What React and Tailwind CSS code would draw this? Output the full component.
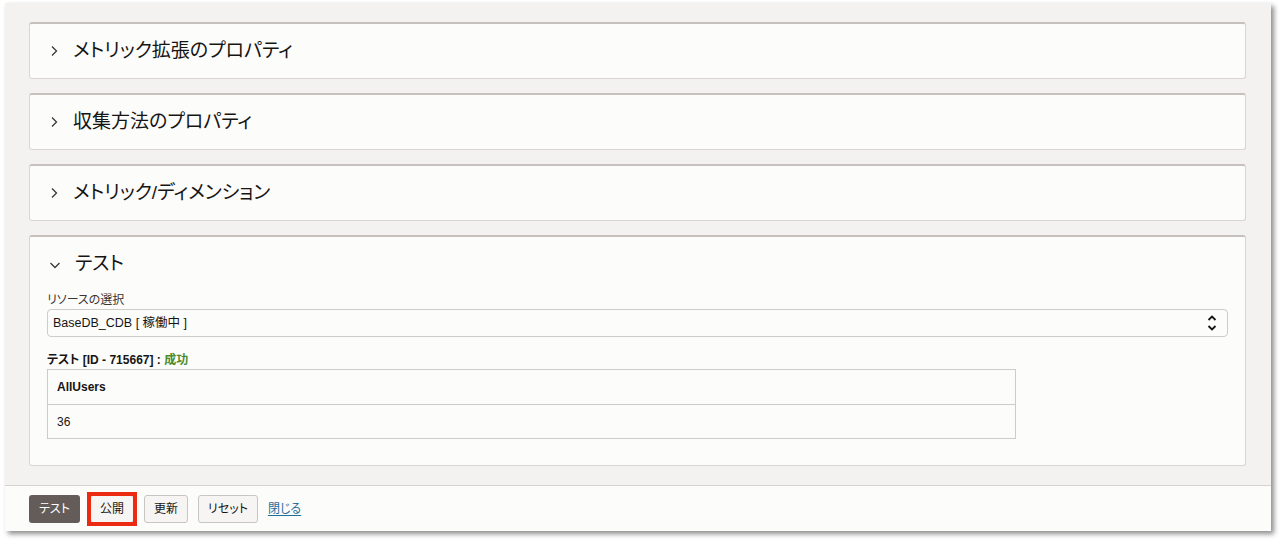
import React from 'react';

const JP = { fontFamily: '"Liberation Sans", "Noto Sans CJK JP", sans-serif', fontFeatureSettings: '"palt"' };

function ChevronRight() {
  return (
    <svg width="10" height="12" viewBox="0 0 10 12" className="shrink-0">
      <path d="M3 1.5 L7.5 6 L3 10.5" fill="none" stroke="#3a3633" strokeWidth="1.3" />
    </svg>
  );
}

function ChevronDown() {
  return (
    <svg width="12" height="10" viewBox="0 0 12 10" className="shrink-0">
      <path d="M1.5 3 L6 7.5 L10.5 3" fill="none" stroke="#3a3633" strokeWidth="1.3" />
    </svg>
  );
}

function UpDown() {
  return (
    <svg width="12" height="18" viewBox="0 0 12 18" className="shrink-0">
      <path d="M2.5 6 L6 2.5 L9.5 6" fill="none" stroke="#161513" strokeWidth="1.8" />
      <path d="M2.5 12 L6 15.5 L9.5 12" fill="none" stroke="#161513" strokeWidth="1.8" />
    </svg>
  );
}

// Collapsed accordion section
function Section({ title }) {
  return (
    <div className="bg-[#fcfcfb] border border-[#d9d5d1] border-t-2 border-t-[#c6c1bc] rounded-[3px] h-[57px] flex items-center pl-[19px] gap-[14px]">
      <ChevronRight />
      <span className="text-[19px] text-[#161513]">{title}</span>
    </div>
  );
}

function Button({ children, dark }) {
  return (
    <button
      className={
        dark
          ? 'h-[28px] px-[10px] rounded-[3px] bg-[#635c58] text-white text-[12px]'
          : 'h-[28px] px-[9px] rounded-[3px] bg-[#f6f5f3] border border-[#c9c5c1] text-[#161513] text-[12px]'
      }
    >
      {children}
    </button>
  );
}

export default function App() {
  return (
    <div className="w-[1286px] h-[544px] bg-white pt-[3px] pl-[5px]" style={JP}>
      <div className="w-[1266px] h-[528px] bg-[#f3f2f1] shadow-[3px_3px_5px_rgba(0,0,0,0.45)] flex flex-col">
        <div className="flex flex-col gap-[14px] pt-[19px] pl-[24px] pr-[25px] pb-[19px]">
          <Section title="メトリック拡張のプロパティ" />
          <Section title="収集方法のプロパティ" />
          <Section title="メトリック/ディメンション" />

          {/* Expanded test section */}
          <div className="bg-[#fcfcfb] border border-[#d9d5d1] border-t-2 border-t-[#c6c1bc] rounded-[3px] h-[231px] flex flex-col">
            <div className="h-[55px] flex items-center pl-[19px] gap-[14px] shrink-0">
              <ChevronDown />
              <span className="text-[19px] text-[#161513]">テスト</span>
            </div>
            <div className="px-[17px] flex flex-col">
              <div className="text-[12px] leading-[16px] text-[#3a3633]">リソースの選択</div>
              <div className="mt-[1px] h-[28px] border border-[#cfcbc7] rounded-[4px] bg-[#fcfcfb] flex items-center justify-between pl-[5px] pr-[9px]">
                <span className="text-[12.5px] text-[#161513]">BaseDB_CDB [ 稼働中 ]</span>
                <UpDown />
              </div>
              <div className="mt-[15px] text-[12px] leading-[16px] font-bold text-[#161513]">
                テスト [ID - 715667] : <span className="text-[#4a8b2c]">成功</span>
              </div>
              <div className="mt-[1px] w-[969px] border border-[#cfcbc7] text-[12px] text-[#161513]">
                <div className="h-[35px] flex items-center px-[9px] font-bold border-b border-[#cfcbc7]">AllUsers</div>
                <div className="h-[33px] flex items-center px-[9px]">36</div>
              </div>
            </div>
          </div>
        </div>

        {/* Footer toolbar */}
        <div className="flex-1 bg-[#fcfcfb] border-t border-[#d6d2ce] flex items-center pl-[24px] gap-[10px]">
          <Button dark>テスト</Button>
          <div className="relative">
            <Button>公開</Button>
            <div className="absolute -inset-[3px] border-[4px] border-[#ec2a12] pointer-events-none" />
          </div>
          <Button>更新</Button>
          <Button>リセット</Button>
          <a href="#" className="text-[12px] text-[#1f6e9c] underline underline-offset-2">閉じる</a>
        </div>
      </div>
    </div>
  );
}
